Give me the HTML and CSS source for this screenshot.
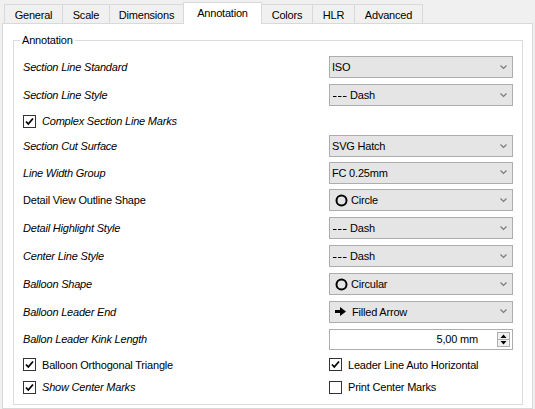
FILE: index.html
```html
<!DOCTYPE html>
<html>
<head>
<meta charset="utf-8">
<link rel="stylesheet" href="styles.css">
</head>
<body>
<div class="tabs">
  <div class="tab t-general">General</div>
  <div class="tab t-scale">Scale</div>
  <div class="tab t-dim">Dimensions</div>
  <div class="tab t-ann active">Annotation</div>
  <div class="tab t-colors">Colors</div>
  <div class="tab t-hlr">HLR</div>
  <div class="tab t-adv">Advanced</div>
</div>
<div class="pane">
  <div class="group">
    <div class="group-title">Annotation</div>
    <div class="form">
      <div class="label it">Section Line Standard</div>
      <div class="combo"><span class="val">ISO</span><svg class="chev" width="7" height="5" viewBox="0 0 7 5"><path d="M0.5 0.5 L3.5 3.5 L6.5 0.5" fill="none" stroke="#7a7a7a" stroke-width="1.2"/></svg></div>

      <div class="label it">Section Line Style</div>
      <div class="combo"><span class="val"><svg class="ico" width="14" height="11" viewBox="0 0 14 11"><path d="M0 6.5 H3.5 M5 6.5 H8.5 M10 6.5 H13.5" stroke="#000" stroke-width="1"/></svg>Dash</span><svg class="chev" width="7" height="5" viewBox="0 0 7 5"><path d="M0.5 0.5 L3.5 3.5 L6.5 0.5" fill="none" stroke="#7a7a7a" stroke-width="1.2"/></svg></div>

      <div class="check wide"><span class="box"><svg width="11" height="11" viewBox="0 0 11 11"><path d="M2 5.5 L4.3 8 L9 2.5" fill="none" stroke="#000" stroke-width="1.8"/></svg></span><span class="it">Complex Section Line Marks</span></div>

      <div class="label it">Section Cut Surface</div>
      <div class="combo"><span class="val">SVG Hatch</span><svg class="chev" width="7" height="5" viewBox="0 0 7 5"><path d="M0.5 0.5 L3.5 3.5 L6.5 0.5" fill="none" stroke="#7a7a7a" stroke-width="1.2"/></svg></div>

      <div class="label it">Line Width Group</div>
      <div class="combo"><span class="val">FC 0.25mm</span><svg class="chev" width="7" height="5" viewBox="0 0 7 5"><path d="M0.5 0.5 L3.5 3.5 L6.5 0.5" fill="none" stroke="#7a7a7a" stroke-width="1.2"/></svg></div>

      <div class="label">Detail View Outline Shape</div>
      <div class="combo"><span class="val"><svg class="ico circ" width="13" height="13" viewBox="0 0 13 13"><circle cx="6.5" cy="6.5" r="5" fill="none" stroke="#000" stroke-width="2"/></svg>Circle</span><svg class="chev" width="7" height="5" viewBox="0 0 7 5"><path d="M0.5 0.5 L3.5 3.5 L6.5 0.5" fill="none" stroke="#7a7a7a" stroke-width="1.2"/></svg></div>

      <div class="label it">Detail Highlight Style</div>
      <div class="combo"><span class="val"><svg class="ico" width="14" height="11" viewBox="0 0 14 11"><path d="M0 6.5 H3.5 M5 6.5 H8.5 M10 6.5 H13.5" stroke="#000" stroke-width="1"/></svg>Dash</span><svg class="chev" width="7" height="5" viewBox="0 0 7 5"><path d="M0.5 0.5 L3.5 3.5 L6.5 0.5" fill="none" stroke="#7a7a7a" stroke-width="1.2"/></svg></div>

      <div class="label it">Center Line Style</div>
      <div class="combo"><span class="val"><svg class="ico" width="14" height="11" viewBox="0 0 14 11"><path d="M0 6.5 H3.5 M5 6.5 H8.5 M10 6.5 H13.5" stroke="#000" stroke-width="1"/></svg>Dash</span><svg class="chev" width="7" height="5" viewBox="0 0 7 5"><path d="M0.5 0.5 L3.5 3.5 L6.5 0.5" fill="none" stroke="#7a7a7a" stroke-width="1.2"/></svg></div>

      <div class="label it">Balloon Shape</div>
      <div class="combo"><span class="val"><svg class="ico circ" width="13" height="13" viewBox="0 0 13 13"><circle cx="6.5" cy="6.5" r="5" fill="none" stroke="#000" stroke-width="2"/></svg>Circular</span><svg class="chev" width="7" height="5" viewBox="0 0 7 5"><path d="M0.5 0.5 L3.5 3.5 L6.5 0.5" fill="none" stroke="#7a7a7a" stroke-width="1.2"/></svg></div>

      <div class="label it">Balloon Leader End</div>
      <div class="combo"><span class="val"><svg class="ico arrow" width="12" height="9" viewBox="0 0 12 9"><path d="M0 3 H5 V0 L11 4.5 L5 9 V6 H0 Z" fill="#000"/></svg>Filled Arrow</span><svg class="chev" width="7" height="5" viewBox="0 0 7 5"><path d="M0.5 0.5 L3.5 3.5 L6.5 0.5" fill="none" stroke="#7a7a7a" stroke-width="1.2"/></svg></div>

      <div class="label it">Ballon Leader Kink Length</div>
      <div class="spin"><span class="spin-val">5,00 mm</span><span class="spin-btns"><span class="sb"><svg width="7" height="4" viewBox="0 0 7 4"><path d="M0.5 4 L3.5 0.5 L6.5 4 Z" fill="#000"/></svg></span><span class="sb"><svg width="7" height="4" viewBox="0 0 7 4"><path d="M0.5 0 L3.5 3.5 L6.5 0 Z" fill="#000"/></svg></span></span></div>

      <div class="check"><span class="box"><svg width="11" height="11" viewBox="0 0 11 11"><path d="M2 5.5 L4.3 8 L9 2.5" fill="none" stroke="#000" stroke-width="1.8"/></svg></span><span>Balloon Orthogonal Triangle</span></div>
      <div class="check"><span class="box"><svg width="11" height="11" viewBox="0 0 11 11"><path d="M2 5.5 L4.3 8 L9 2.5" fill="none" stroke="#000" stroke-width="1.8"/></svg></span><span>Leader Line Auto Horizontal</span></div>

      <div class="check"><span class="box"><svg width="11" height="11" viewBox="0 0 11 11"><path d="M2 5.5 L4.3 8 L9 2.5" fill="none" stroke="#000" stroke-width="1.8"/></svg></span><span class="it">Show Center Marks</span></div>
      <div class="check"><span class="box"></span><span>Print Center Marks</span></div>
    </div>
  </div>
</div>
</body>
</html>
```

FILE: styles.css
```css
* { box-sizing: border-box; }
html, body { margin: 0; padding: 0; }
body {
  background: #f0f0f0;
  font-family: "Liberation Sans", Arial, sans-serif;
  font-size: 11px;
  letter-spacing: -0.2px;
  color: #000;
  width: 535px;
  height: 409px;
  overflow: hidden;
}
.tabs {
  display: flex;
  padding: 2px 0 0 4px;
  height: 23px;
  align-items: flex-end;
  position: relative;
  z-index: 1;
}
.tab {
  height: 19px;
  border: 1px solid #d9d9d9;
  border-bottom: none;
  margin-left: -1px;
  background: #f0f0f0;
  display: flex;
  align-items: center;
  justify-content: center;
  padding-top: 1px;
}
.tab:first-child { margin-left: 0; }
.t-general { width: 59px; }
.t-scale { width: 48px; }
.t-dim { width: 75px; }
.t-ann { width: 79px; }
.t-colors { width: 52px; }
.t-hlr { width: 43px; }
.t-adv { width: 69px; }
.tab.active {
  background: #fff;
  height: 22px;
  margin-bottom: -1px;
  padding-top: 0;
  padding-bottom: 2px;
}
.pane {
  margin: 0 2px;
  height: 386px;
  border: 1px solid #d9d9d9;
  background: #fff;
  padding: 16px 9px 0 10px;
}
.group {
  position: relative;
  border: 1px solid #dcdcdc;
  padding: 12px 9px 6px 9px;
}
.group-title {
  position: absolute;
  left: 6px;
  top: -7px;
  background: #fff;
  padding: 0 2px;
  line-height: 13px;
}
.form {
  display: grid;
  grid-template-columns: 1fr 184px;
  grid-template-rows: 28px 28px 24px 26px 27px 28px 28px 28px 28px 27px 28px 23px 22px;
  align-items: center;
}
.it { font-style: italic; }
.label { white-space: nowrap; }
.combo {
  height: 22px;
  border: 1px solid #adadad;
  background: #e5e5e5;
  display: flex;
  align-items: center;
  justify-content: space-between;
  padding: 0 5px 0 2px;
}
.val { display: flex; align-items: center; }
.ico { margin-right: 3px; margin-left: 1px; }
.circ { margin-left: 3px; margin-right: 3px; }
.arrow { margin-left: 3px; margin-right: 5px; }
.spin {
  height: 21px;
  border: 1px solid #adadad;
  background: #fff;
  display: flex;
  align-items: center;
  justify-content: flex-end;
  padding: 0 2px 0 2px;
}
.spin-val { margin-right: 19px; }
.spin-btns {
  display: flex;
  flex-direction: column;
  width: 13px;
  height: 15px;
  border: 1px solid #adadad;
  background: #f0f0f0;
}
.sb {
  flex: 1;
  display: flex;
  align-items: center;
  justify-content: center;
}
.sb + .sb { border-top: 1px solid #adadad; }
.check {
  display: flex;
  align-items: center;
  white-space: nowrap;
}
.check.wide { grid-column: 1 / 3; }
.box {
  width: 13px;
  height: 13px;
  border: 1px solid #333;
  background: #fff;
  margin-right: 6px;
  display: flex;
  align-items: center;
  justify-content: center;
}
.box svg { display: block; }
```
